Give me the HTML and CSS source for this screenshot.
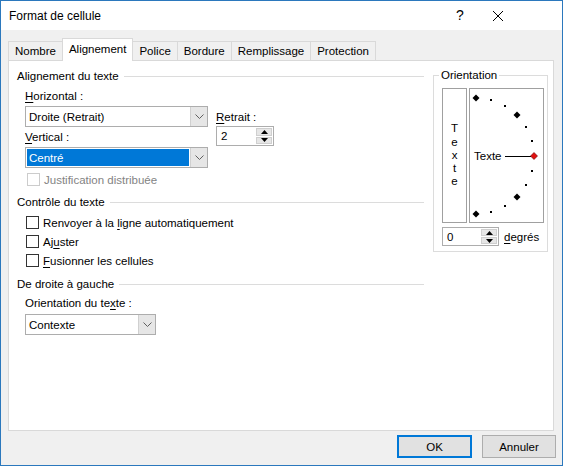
FILE: index.html
```html
<!DOCTYPE html>
<html lang="fr">
<head>
<meta charset="utf-8">
<title>Format de cellule</title>
<link rel="stylesheet" href="styles.css">
</head>
<body>
<div class="window">
  <div class="titlebar">
    <span class="title">Format de cellule</span>
    <span class="help">?</span>
    <span class="close">
      <svg width="12" height="12" viewBox="0 0 12 12"><path d="M1 1 L11 11 M11 1 L1 11" stroke="#000" stroke-width="1" fill="none"/></svg>
    </span>
  </div>

  <div class="tabs">
    <div class="tab">Nombre</div>
    <div class="tab tab-active">Alignement</div>
    <div class="tab">Police</div>
    <div class="tab">Bordure</div>
    <div class="tab">Remplissage</div>
    <div class="tab">Protection</div>
  </div>

  <div class="panel">
    <div class="left">
      <div class="group-head"><span>Alignement du texte</span><i class="rule"></i></div>

      <div class="align-row">
        <div class="align-main">
          <div class="label"><u>H</u>orizontal :</div>
          <div class="combo combo-wide">
            <span class="combo-text">Droite (Retrait)</span>
            <span class="combo-btn"><svg width="9" height="5" viewBox="0 0 9 5"><path d="M0.5 0.5 L4.5 4.5 L8.5 0.5" stroke="#606060" fill="none"/></svg></span>
          </div>
          <div class="label label-v"><u>V</u>ertical :</div>
          <div class="combo combo-wide">
            <span class="combo-text combo-selected">Centré</span>
            <span class="combo-btn"><svg width="9" height="5" viewBox="0 0 9 5"><path d="M0.5 0.5 L4.5 4.5 L8.5 0.5" stroke="#606060" fill="none"/></svg></span>
          </div>
        </div>
        <div class="align-side">
          <div class="label"><u>R</u>etrait :</div>
          <div class="spin spin-retrait">
            <span class="spin-text">2</span>
            <span class="spin-btns">
              <span class="spin-up"><svg width="7" height="4" viewBox="0 0 7 4"><path d="M3.5 0 L7 4 L0 4 Z" fill="#000"/></svg></span>
              <span class="spin-down"><svg width="7" height="4" viewBox="0 0 7 4"><path d="M0 0 L7 0 L3.5 4 Z" fill="#000"/></svg></span>
            </span>
          </div>
        </div>
      </div>

      <div class="check check-disabled"><span class="box"></span><span>Justification distribuée</span></div>

      <div class="group-head group-head-2"><span>Contrôle du texte</span><i class="rule"></i></div>
      <div class="check check-first"><span class="box"></span><span>Renvoyer à la <u>l</u>igne automatiquement</span></div>
      <div class="check"><span class="box"></span><span>Aj<u>u</u>ster</span></div>
      <div class="check"><span class="box"></span><span><u>F</u>usionner les cellules</span></div>

      <div class="group-head group-head-3"><span>De droite à gauche</span><i class="rule"></i></div>
      <div class="label label-o">Orientation du te<u>x</u>te :</div>
      <div class="combo combo-small">
        <span class="combo-text">Contexte</span>
        <span class="combo-btn"><svg width="9" height="5" viewBox="0 0 9 5"><path d="M0.5 0.5 L4.5 4.5 L8.5 0.5" stroke="#606060" fill="none"/></svg></span>
      </div>
    </div>

    <div class="right">
      <div class="orient">
        <span class="orient-label">Orientation</span>
        <div class="orient-boxes">
          <div class="vtext">
            <span>T</span><span>e</span><span>x</span><span>t</span><span>e</span>
          </div>
          <div class="dial">
            <svg width="73" height="133" viewBox="0 0 73 133">
              <g fill="#000">
                <rect x="20" y="10" width="2" height="2"/>
                <rect x="34" y="16" width="2" height="2"/>
                <rect x="55" y="37" width="2" height="2"/>
                <rect x="61" y="51" width="2" height="2"/>
                <rect x="61" y="81" width="2" height="2"/>
                <rect x="55" y="95" width="2" height="2"/>
                <rect x="34" y="116" width="2" height="2"/>
                <rect x="20" y="122" width="2" height="2"/>
                <path d="M6 5.5 L9.5 9 L6 12.5 L2.5 9 Z"/>
                <path d="M47 22.5 L50.5 26 L47 29.5 L43.5 26 Z"/>
                <path d="M47 104.5 L50.5 108 L47 111.5 L43.5 108 Z"/>
                <path d="M6 121.5 L9.5 125 L6 128.5 L2.5 125 Z"/>
              </g>
              <line x1="35" y1="67.5" x2="61" y2="67.5" stroke="#000" stroke-width="1"/>
              <path d="M64 63.5 L67.5 67 L64 70.5 L60.5 67 Z" fill="#e01010" stroke="#600" stroke-width="0.6"/>
              <text x="4" y="71" class="dial-text">Texte</text>
            </svg>
          </div>
        </div>
        <div class="deg-row">
          <div class="spin spin-deg">
            <span class="spin-text">0</span>
            <span class="spin-btns">
              <span class="spin-up"><svg width="7" height="4" viewBox="0 0 7 4"><path d="M3.5 0 L7 4 L0 4 Z" fill="#000"/></svg></span>
              <span class="spin-down"><svg width="7" height="4" viewBox="0 0 7 4"><path d="M0 0 L7 0 L3.5 4 Z" fill="#000"/></svg></span>
            </span>
          </div>
          <span class="deg-label"><u>d</u>egrés</span>
        </div>
      </div>
    </div>
  </div>

  <div class="buttons">
    <button class="btn btn-default">OK</button>
    <button class="btn">Annuler</button>
  </div>
</div>
</body>
</html>
```
FILE: styles.css
```css
* { box-sizing: border-box; }
html, body { margin: 0; padding: 0; background: #ffffff; }
body {
  font-family: "Liberation Sans", Arial, sans-serif;
  font-size: 11.5px;
  color: #000;
}
u { text-decoration: underline; text-underline-offset: 2px; }

.window {
  width: 563px;
  height: 466px;
  border: 1px solid #2b78bd;
  background: #f0f0f0;
}

.titlebar {
  height: 29px;
  background: #ffffff;
  display: flex;
  align-items: center;
  position: relative;
}
.title { margin-left: 8px; font-size: 12px; }
.help { position: absolute; left: 455px; top: 6px; font-size: 14px; }
.close { position: absolute; left: 491px; top: 9px; display: flex; }

.tabs {
  display: flex;
  align-items: flex-end;
  height: 22px;
  margin: 8px 0 0 7px;
  position: relative;
  z-index: 1;
}
.tab {
  height: 19px;
  border: 1px solid #d9d9d9;
  border-bottom: none;
  margin-left: -1px;
  padding: 0 6px;
  display: flex;
  align-items: center;
  background: #f0f0f0;
}
.tab:first-child { margin-left: 0; }
.tab-active {
  height: 23px;
  margin-bottom: -1px;
  background: #fff;
  padding-bottom: 2px;
  position: relative;
}

.panel {
  margin-left: 7px;
  width: 546px;
  height: 371px;
  border: 1px solid #d9d9d9;
  background: #fff;
  display: flex;
  padding-top: 7px;
}

.left { width: 407px; margin-left: 8px; }
.right { margin-left: 9px; width: 115px; margin-top: 7px; }

.group-head {
  display: flex;
  align-items: center;
  height: 16px;
  gap: 5px;
}
.rule { flex: 1; height: 1px; background: #dcdcdc; }
.group-head-2 { margin-top: 7px; }
.group-head-3 { margin-top: 6px; }

.label { height: 15px; line-height: 15px; }

.align-row { display: flex; margin-top: 5px; margin-left: 8px; }
.align-main { width: 183px; }
.align-main .combo { margin-top: 2px; }
.label-v { margin-top: 3px; }
.align-side { margin-left: 8px; padding-top: 21px; }
.align-side .spin { margin-top: 1px; }

.combo {
  height: 21px;
  border: 1px solid #adadad;
  background: #fff;
  display: flex;
  align-items: stretch;
  padding: 1px 0 1px 1px;
}
.combo-wide { width: 183px; }
.combo-small { width: 131px; margin-left: 8px; margin-top: 3px; }
.combo-text {
  flex: 1;
  display: flex;
  align-items: center;
  padding-left: 2px;
}
.combo-selected { background: #0078d7; color: #fff; margin-right: 1px; }
.combo-btn {
  width: 17px;
  display: flex;
  align-items: center;
  justify-content: center;
  background: #e6e6e6;
  border-left: 1px solid #d0d0d0;
  margin: -1px 0;
}

.spin {
  height: 20px;
  border: 1px solid #adadad;
  background: #fff;
  display: flex;
  padding: 1px;
}
.spin-retrait { width: 58px; }
.spin-deg { width: 57px; height: 19px; }
.spin-text { flex: 1; display: flex; align-items: center; padding-left: 3px; }
.spin-btns { width: 16px; display: flex; flex-direction: column; gap: 1px; }
.spin-up, .spin-down {
  flex: 1;
  background: #e6e6e6;
  border: 1px solid #cfcfcf;
  display: flex;
  align-items: center;
  justify-content: center;
}

.check {
  display: flex;
  align-items: center;
  height: 19px;
  margin-left: 9px;
  gap: 4px;
}
.check-first { margin-top: 3px; }
.check .box {
  width: 13px;
  height: 13px;
  border: 1px solid #333;
  background: #fff;
}
.check-disabled { margin-top: 4px; height: 15px; margin-left: 10px; color: #838383; }
.check-disabled .box { border-color: #cccccc; }

.label-o { margin-top: 4px; margin-left: 8px; }

.orient {
  position: relative;
  border: 1px solid #dcdcdc;
  padding: 12px 3px 5px 8px;
}
.orient-label {
  position: absolute;
  left: 5px;
  top: -8px;
  background: #fff;
  padding: 0 2px;
  line-height: 15px;
}
.orient-boxes { display: flex; gap: 2px; }
.vtext {
  width: 25px;
  height: 135px;
  border: 1px solid #a0a0a0;
  display: flex;
  flex-direction: column;
  align-items: center;
  justify-content: center;
  line-height: 13.3px;
}
.dial {
  width: 75px;
  height: 135px;
  border: 1px solid #a0a0a0;
  display: flex;
}
.dial-text { font-family: "Liberation Sans", Arial, sans-serif; font-size: 11.5px; fill: #000; }

.deg-row { display: flex; align-items: center; margin-top: 4px; gap: 5px; }

.buttons {
  display: flex;
  justify-content: flex-end;
  gap: 10px;
  margin-top: 4px;
  padding-right: 6px;
}
.btn {
  font-family: "Liberation Sans", Arial, sans-serif;
  font-size: 11.5px;
  height: 23px;
  width: 74px;
  border: 1px solid #adadad;
  background: #e1e1e1;
  color: #000;
  padding: 0;
}
.btn-default { width: 75px; border: 2px solid #0078d7; }
```
